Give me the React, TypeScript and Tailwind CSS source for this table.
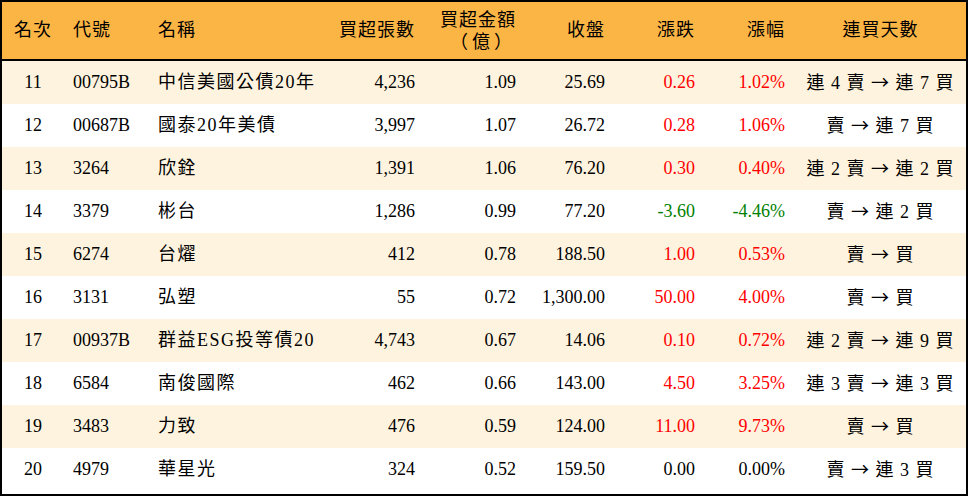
import React from "react";

interface Row {
  rank: number;
  code: string;
  name: string;
  lots: string;
  amount: string;
  close: string;
  change: string;
  pct: string;
  streak: string;
}

const ROWS: Row[] = [
  { rank: 11, code: "00795B", name: "中信美國公債20年", lots: "4,236", amount: "1.09", close: "25.69", change: "0.26", pct: "1.02%", streak: "連 4 賣 → 連 7 買" },
  { rank: 12, code: "00687B", name: "國泰20年美債", lots: "3,997", amount: "1.07", close: "26.72", change: "0.28", pct: "1.06%", streak: "賣 → 連 7 買" },
  { rank: 13, code: "3264", name: "欣銓", lots: "1,391", amount: "1.06", close: "76.20", change: "0.30", pct: "0.40%", streak: "連 2 賣 → 連 2 買" },
  { rank: 14, code: "3379", name: "彬台", lots: "1,286", amount: "0.99", close: "77.20", change: "-3.60", pct: "-4.46%", streak: "賣 → 連 2 買" },
  { rank: 15, code: "6274", name: "台燿", lots: "412", amount: "0.78", close: "188.50", change: "1.00", pct: "0.53%", streak: "賣 → 買" },
  { rank: 16, code: "3131", name: "弘塑", lots: "55", amount: "0.72", close: "1,300.00", change: "50.00", pct: "4.00%", streak: "賣 → 買" },
  { rank: 17, code: "00937B", name: "群益ESG投等債20", lots: "4,743", amount: "0.67", close: "14.06", change: "0.10", pct: "0.72%", streak: "連 2 賣 → 連 9 買" },
  { rank: 18, code: "6584", name: "南俊國際", lots: "462", amount: "0.66", close: "143.00", change: "4.50", pct: "3.25%", streak: "連 3 賣 → 連 3 買" },
  { rank: 19, code: "3483", name: "力致", lots: "476", amount: "0.59", close: "124.00", change: "11.00", pct: "9.73%", streak: "賣 → 買" },
  { rank: 20, code: "4979", name: "華星光", lots: "324", amount: "0.52", close: "159.50", change: "0.00", pct: "0.00%", streak: "賣 → 連 3 買" },
];

const GRID = "grid grid-cols-[62px_86px_180px_95px_101px_89px_90px_90px_171px]";

function tone(v: string) {
  if (v.startsWith("-")) return "text-[#008000]";
  if (parseFloat(v) === 0) return "text-black";
  return "text-[#ff0000]";
}

// the arrow is drawn in the CJK font so it gets its full-width shape
function Streak({ text }: { text: string }) {
  const [from, to] = text.split(" → ");
  return (
    <>
      {from}{" "}
      <span style={{ fontFamily: '"Noto Sans CJK TC", sans-serif' }}>→</span>
      {" "}{to}
    </>
  );
}

export default function App() {
  return (
    <div
      className="w-[968px] h-[496px] bg-white border-2 border-black text-black text-[18px] overflow-hidden"
      style={{ fontFamily: '"Liberation Serif", "Noto Sans CJK TC", serif' }}
    >
      {/* Header */}
      <div className={`${GRID} h-[59px] bg-[#fbb545] border-b-2 border-black items-center tracking-[1px]`}>
        <div className="text-center">名次</div>
        <div className="pl-[9px]">代號</div>
        <div className="pl-[8px]">名稱</div>
        <div className="text-right pr-[10px]">買超張數</div>
        <div className="text-right pr-[10px] leading-[22px]">
          <div>買超金額</div>
          <div className="tracking-[4px]">（億）</div>
        </div>
        <div className="text-right pr-[10px]">收盤</div>
        <div className="text-right pr-[10px]">漲跌</div>
        <div className="text-right pr-[10px]">漲幅</div>
        <div className="text-center">連買天數</div>
      </div>

      {/* Rows */}
      {ROWS.map((r, i) => (
        <div
          key={r.rank}
          className={`${GRID} h-[43px] items-center ${i % 2 === 0 ? "bg-[#fef3de]" : "bg-white"}`}
        >
          <div className="text-center">{r.rank}</div>
          <div className="pl-[9px]">{r.code}</div>
          <div className="pl-[8px] tracking-[1.5px] whitespace-nowrap">{r.name}</div>
          <div className="text-right pr-[10px]">{r.lots}</div>
          <div className="text-right pr-[10px]">{r.amount}</div>
          <div className="text-right pr-[10px]">{r.close}</div>
          <div className={`text-right pr-[10px] ${tone(r.change)}`}>{r.change}</div>
          <div className={`text-right pr-[10px] ${tone(r.pct)}`}>{r.pct}</div>
          <div className="text-center whitespace-nowrap tracking-[1px]">
            <Streak text={r.streak} />
          </div>
        </div>
      ))}
    </div>
  );
}
